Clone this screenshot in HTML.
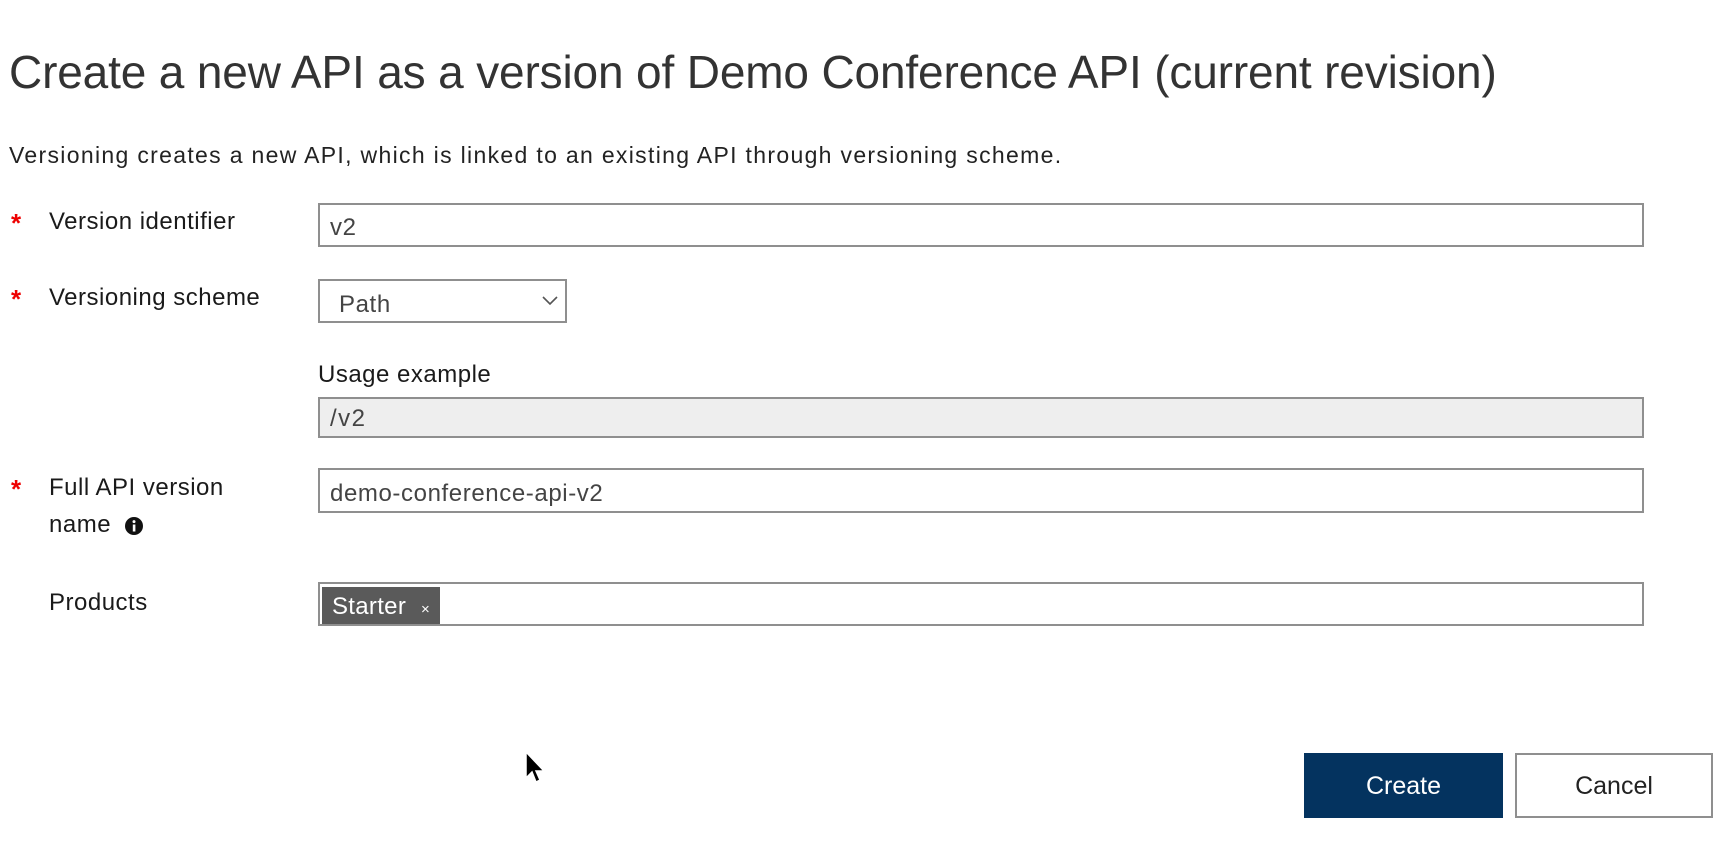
<!DOCTYPE html>
<html><head><meta charset="utf-8"><style>
body{margin:0;width:1722px;height:848px;background:#fff;font-family:"Liberation Sans",sans-serif;color:#222;position:relative;overflow:hidden}
.a{position:absolute;white-space:nowrap}
.box{position:absolute;border:2px solid #8f8f8f;box-sizing:border-box;background:#fff}
.star{color:#e00;font-size:26px;font-weight:bold}
.lbl{font-size:24px;color:#1a1a1a;letter-spacing:0.5px}
.val{font-size:24px;color:#444;letter-spacing:0.6px}
</style></head><body>
<div class="a" style="left:9px;top:44px;font-size:46px;color:#333;line-height:56px;letter-spacing:-0.15px">Create a new API as a version of Demo Conference API (current revision)</div>
<div class="a" style="left:9px;top:142px;font-size:23px;color:#222;letter-spacing:1.32px">Versioning creates a new API, which is linked to an existing API through versioning scheme.</div>

<div class="a star" style="left:11px;top:208px">*</div>
<div class="a lbl" style="left:49px;top:208px">Version identifier</div>
<div class="box" style="left:318px;top:203px;width:1326px;height:44px"><span class="a val" style="left:10px;top:9px">v2</span></div>

<div class="a star" style="left:11px;top:284px">*</div>
<div class="a lbl" style="left:49px;top:284px">Versioning scheme</div>
<div class="box" style="left:318px;top:279px;width:249px;height:44px"><span class="a val" style="left:19px;top:10px">Path</span>
<svg class="a" style="left:222px;top:13px" width="16" height="12"><path d="M1 3 L8 10 L15 3" fill="none" stroke="#555" stroke-width="1.6"/></svg></div>

<div class="a lbl" style="left:318px;top:361px">Usage example</div>
<div class="box" style="left:318px;top:397px;width:1326px;height:41px;background:#eee"><span class="a val" style="left:10px;top:6px;letter-spacing:1.5px">/v2</span></div>

<div class="a star" style="left:11px;top:474px">*</div>
<div class="a lbl" style="left:49px;top:474px">Full API version</div>
<div class="a lbl" style="left:49px;top:511px">name</div>
<svg class="a" style="left:124px;top:516px" width="20" height="20"><circle cx="10" cy="10" r="9" fill="#111"/><rect x="8.8" y="8.5" width="2.6" height="7" fill="#fff"/><circle cx="10" cy="5.6" r="1.5" fill="#fff"/></svg>
<div class="box" style="left:318px;top:468px;width:1326px;height:45px"><span class="a val" style="left:10px;top:10px">demo-conference-api-v2</span></div>

<div class="a lbl" style="left:49px;top:589px">Products</div>
<div class="box" style="left:318px;top:582px;width:1326px;height:44px">
<div class="a" style="left:2px;top:3px;width:118px;height:37px;background:#5a5a5a;color:#fff;font-size:24px;letter-spacing:0.3px"><span class="a" style="left:10px;top:6px">Starter</span><span class="a" style="left:99px;top:14px;font-size:15px">×</span></div></div>

<div class="a" style="left:1304px;top:753px;width:199px;height:65px;background:#04335f;color:#fff;font-size:25px;text-align:center;line-height:67px">Create</div>
<div class="box" style="left:1515px;top:753px;width:198px;height:65px;font-size:25px;text-align:center;line-height:63px;color:#222">Cancel</div>

<svg class="a" style="left:524px;top:750px" width="22" height="36"><path d="M2 2 L2 28 L8 22 L12 32 L16 30 L12 21 L20 21 Z" fill="#000" stroke="#fff" stroke-width="1.5"/></svg>
</body></html>
